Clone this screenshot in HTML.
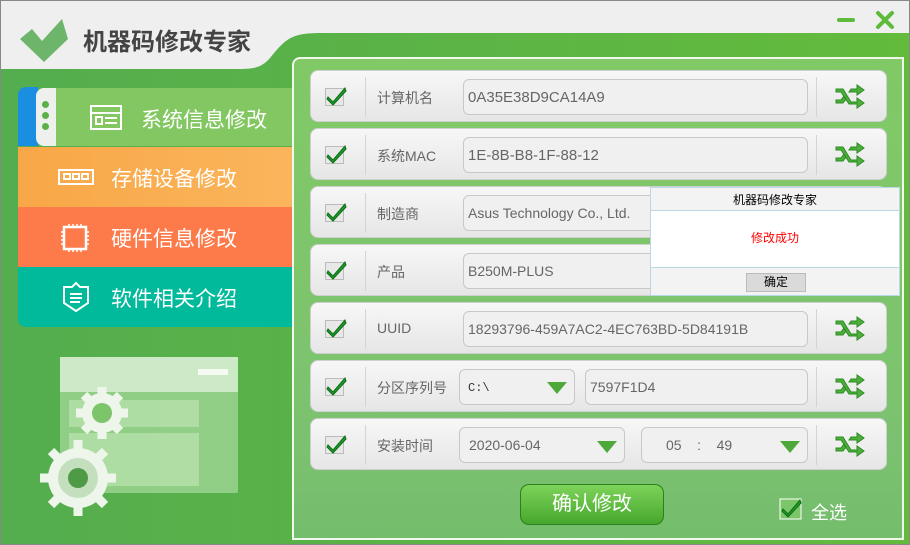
<!DOCTYPE html>
<html><head><meta charset="utf-8"><style>
*{margin:0;padding:0;box-sizing:border-box}
body{width:910px;height:545px;overflow:hidden;font-family:"Liberation Sans","Noto Sans CJK SC",sans-serif;background:#5bb04c;position:relative}
.abs{position:absolute}
#frame{left:0;top:0;width:910px;height:545px;border:1px solid #888;background:linear-gradient(90deg,#54ad4e,#63bb3c)}
.row{position:absolute;left:310px;width:577px;height:52px;border-radius:8px;background:linear-gradient(#f7f7f7,#e6e6e6);border:1px solid #cfcfcf}
.row .cb{position:absolute;left:14px;top:15px;width:22px;height:20px}
.row .sep{position:absolute;top:6px;width:1px;height:40px;background:#d4d4d4}
.row .lbl{position:absolute;left:66px;top:17px;font-size:14px;color:#666}
.inp{position:absolute;top:8px;height:36px;border:1px solid #c8c8c8;border-radius:6px;background:#f0f0f0;font-size:15px;color:#666;padding:9px 4px}
.tri{position:absolute;width:0;height:0;border-left:10px solid transparent;border-right:10px solid transparent;border-top:12px solid #4ea93a}
.sh{position:absolute;right:20px;top:12px}
.menu{position:absolute;left:18px;width:275px;height:60px;color:#fff;font-size:21px}
.menu span{position:absolute;left:93px;top:16px}
</style></head><body>
<div id="frame" class="abs"></div>
<svg class="abs" style="left:0;top:0" width="910" height="70"><path d="M1 1H909V33H320C290 33 285 40 270 58C262 67 255 69 240 69H1Z" fill="#efefef"/></svg>
<svg class="abs" style="left:18px;top:15px" width="52" height="50"><path d="M2 24L14 14L24 26L44 4L50 24L26 47Z" fill="#6db56a"/><path d="M10 26L14 22L24 33L42 14L44 20L24 41Z" fill="#efefef" opacity="0"/></svg>
<div class="abs" style="left:83px;top:22px;font-size:24px;font-weight:bold;color:#444">机器码修改专家</div>
<div class="abs" style="left:837px;top:18px;width:18px;height:4px;border-radius:2px;background:#5dba3a"></div>
<svg class="abs" style="left:875px;top:10px" width="20" height="20"><path d="M3 3L17 17M17 3L3 17" stroke="#5dba3a" stroke-width="4" stroke-linecap="round"/></svg>
<!-- left menu -->
<div class="abs" style="left:18px;top:87px;width:20px;height:59px;background:#1a8ee0;border-radius:8px 0 0 0"></div>
<div class="abs" style="left:36px;top:88px;width:20px;height:58px;background:#eef0ee;border-radius:8px 0 0 8px"></div>
<div class="abs" style="left:42px;top:101px;width:7px;height:7px;border-radius:50%;background:#5bb047"></div>
<div class="abs" style="left:42px;top:112px;width:7px;height:7px;border-radius:50%;background:#5bb047"></div>
<div class="abs" style="left:42px;top:123px;width:7px;height:7px;border-radius:50%;background:#5bb047"></div>
<div class="menu" style="left:56px;top:88px;width:237px;height:58px;background:#82c761"><svg class="abs" style="left:34px;top:17px" width="34" height="26"><rect x="1" y="1" width="30" height="23" fill="none" stroke="#fff" stroke-width="2"/><path d="M1 8H31M6 12H12V19H6ZM15 13H27M15 18H27" stroke="#fff" stroke-width="2" fill="none"/></svg><span style="left:85px">系统信息修改</span></div>
<div class="menu" style="top:147px;background:linear-gradient(90deg,#f8a747,#fbb55c)"><svg class="abs" style="left:40px;top:22px" width="36" height="16"><path d="M1 1H35V15H1Z M6 5H12V10H6ZM15 5H21V10H15ZM24 5H30V10H24Z" fill="none" stroke="#fff" stroke-width="2"/></svg><span>存储设备修改</span></div>
<div class="menu" style="top:207px;background:#fd7a4a"><svg class="abs" style="left:42px;top:16px" width="30" height="30"><rect x="4" y="4" width="22" height="22" fill="none" stroke="#fff" stroke-width="2.5"/><path d="M9 1V4M13 1V4M17 1V4M21 1V4M9 26V29M13 26V29M17 26V29M21 26V29M1 9H4M1 13H4M1 17H4M1 21H4M26 9H29M26 13H29M26 17H29M26 21H29" stroke="#fff" stroke-width="1.5"/></svg><span>硬件信息修改</span></div>
<div class="menu" style="top:267px;background:#00ba9b;border-radius:0 0 0 8px"><svg class="abs" style="left:44px;top:14px" width="28" height="32"><path d="M14 2L18 6H26V22L14 30L2 22V6H10Z" fill="none" stroke="#fff" stroke-width="2"/><path d="M8 13H20M8 17H20M8 21H18" stroke="#fff" stroke-width="2"/></svg><span>软件相关介绍</span></div>
<!-- illustration -->
<svg class="abs" style="left:0;top:330px" width="290" height="214">
<rect x="60" y="27" width="178" height="136" rx="2" fill="#a9db9f" opacity=".7"/>
<rect x="60" y="27" width="178" height="35" fill="#d4ecce" opacity=".9"/>
<rect x="198" y="39" width="30" height="6" fill="#f5fbf3"/>
<rect x="69" y="70" width="130" height="27" fill="#c3e7b9" opacity=".6"/>
<rect x="69" y="103" width="130" height="53" fill="#c3e7b9" opacity=".6"/>
<g fill="#eef6ec"><circle cx="102" cy="83" r="20"/><circle cx="78" cy="148" r="30"/></g>
<g stroke="#eef6ec" stroke-width="9"><path d="M102 57V109M76 83H128M84 65L120 101M120 65L84 101"/><path d="M78 110V186M40 148H116M51 121L105 175M105 121L51 175"/></g>
<circle cx="102" cy="83" r="10" fill="#7dc56b"/><circle cx="78" cy="148" r="20" fill="#c4dfbe"/><circle cx="78" cy="148" r="10" fill="#4f9a47"/>
</svg>
<!-- right panel -->
<div class="abs" style="left:292px;top:57px;width:612px;height:483px;border:2px solid #f0f8ec;border-radius:8px 0 0 0;background:linear-gradient(#81c966,#7bc270 80%,#74bd6c)"></div>

<svg width="0" height="0" style="position:absolute"><defs>
<symbol id="ck" viewBox="0 0 22 20"><rect x="0.5" y="2.5" width="18" height="17" fill="#e8e8e8" stroke="#bbb"/><path d="M3 11L8 16L20 2L21 5L8 19L2 13Z" fill="#1f9a2a" stroke="#0d6d17" stroke-width="1"/></symbol>
<symbol id="sf" viewBox="0 0 32 26"><path d="M2 6H9L17 19H23V15L30 20L23 25V21H15L7 9H2Z M2 17H7L10 13L12 16L9 20H2Z M15 9L17 6H23V2L30 7L23 12V9Z" fill="#4cb03a" stroke="#2d8a24" stroke-width="1"/></symbol>
</defs></svg>

<div class="row" style="top:70px"><svg class="cb"><use href="#ck"/></svg><div class="sep" style="left:54px"></div><div class="lbl">计算机名</div><div class="inp" style="left:152px;width:345px">0A35E38D9CA14A9</div><div class="sep" style="left:505px"></div><svg class="sh" width="32" height="26"><use href="#sf"/></svg></div>
<div class="row" style="top:128px"><svg class="cb"><use href="#ck"/></svg><div class="sep" style="left:54px"></div><div class="lbl">系统MAC</div><div class="inp" style="left:152px;width:345px">1E-8B-B8-1F-88-12</div><div class="sep" style="left:505px"></div><svg class="sh" width="32" height="26"><use href="#sf"/></svg></div>
<div class="row" style="top:186px"><svg class="cb"><use href="#ck"/></svg><div class="sep" style="left:54px"></div><div class="lbl">制造商</div><div class="inp" style="left:152px;width:345px;font-size:14px">Asus Technology Co., Ltd.</div><div class="sep" style="left:505px"></div><svg class="sh" width="32" height="26"><use href="#sf"/></svg></div>
<div class="row" style="top:244px"><svg class="cb"><use href="#ck"/></svg><div class="sep" style="left:54px"></div><div class="lbl">产品</div><div class="inp" style="left:152px;width:345px;font-size:14px">B250M-PLUS</div><div class="sep" style="left:505px"></div><svg class="sh" width="32" height="26"><use href="#sf"/></svg></div>
<div class="row" style="top:302px"><svg class="cb"><use href="#ck"/></svg><div class="sep" style="left:54px"></div><div class="lbl">UUID</div><div class="inp" style="left:152px;width:345px;font-size:14px">18293796-459A7AC2-4EC763BD-5D84191B</div><div class="sep" style="left:505px"></div><svg class="sh" width="32" height="26"><use href="#sf"/></svg></div>
<div class="row" style="top:360px"><svg class="cb"><use href="#ck"/></svg><div class="sep" style="left:54px"></div><div class="lbl">分区序列号</div><div class="inp" style="left:148px;width:116px;font-size:12px;font-family:'Liberation Mono',monospace;color:#333;padding:11px 8px">C:\</div><div class="tri" style="left:236px;top:21px"></div><div class="inp" style="left:274px;width:223px;font-size:14px">7597F1D4</div><div class="sep" style="left:505px"></div><svg class="sh" width="32" height="26"><use href="#sf"/></svg></div>
<div class="row" style="top:418px"><svg class="cb"><use href="#ck"/></svg><div class="sep" style="left:54px"></div><div class="lbl">安装时间</div><div class="inp" style="left:148px;width:166px;font-size:14px;padding:9px 9px">2020-06-04</div><div class="tri" style="left:286px;top:22px"></div><div class="inp" style="left:330px;width:167px;font-size:14px;padding:9px 24px">05 &nbsp;&nbsp;&nbsp;: &nbsp;&nbsp;&nbsp;49</div><div class="tri" style="left:469px;top:22px"></div><div class="sep" style="left:505px"></div><svg class="sh" width="32" height="26"><use href="#sf"/></svg></div>

<div class="abs" style="left:520px;top:484px;width:144px;height:41px;border-radius:9px;border:1px solid #2d7f20;background:linear-gradient(#7ed35a,#46a72d);color:#fff;font-size:20px;text-align:center;line-height:38px">确认修改</div>
<svg class="abs" style="left:779px;top:498px" width="24" height="22"><rect x="1" y="1" width="21" height="20" fill="#7cc66a" stroke="#fff"/><path d="M4 11L9 16L21 2L22 5L9 19L3 13Z" fill="#1f9a2a" stroke="#0d6d17"/></svg>
<div class="abs" style="left:811px;top:499px;font-size:18px;color:#fff">全选</div>

<!-- dialog -->
<div class="abs" style="left:650px;top:187px;width:250px;height:109px;background:#f3f3f3;border:1px solid #b8d8e6">
<div style="height:23px;text-align:center;font-size:12px;line-height:24px;color:#000;border-bottom:1px solid #b8d8e6">机器码修改专家</div>
<div style="height:57px;background:#fff;text-align:center;color:#f00;font-size:12px;line-height:55px;border-bottom:1px solid #b8d8e6">修改成功</div>
<div style="position:absolute;left:95px;top:85px;width:60px;height:19px;background:#dadada;border:1px solid #bbb;font-size:12px;text-align:center;line-height:17px">确定</div>
</div>
</body></html>
